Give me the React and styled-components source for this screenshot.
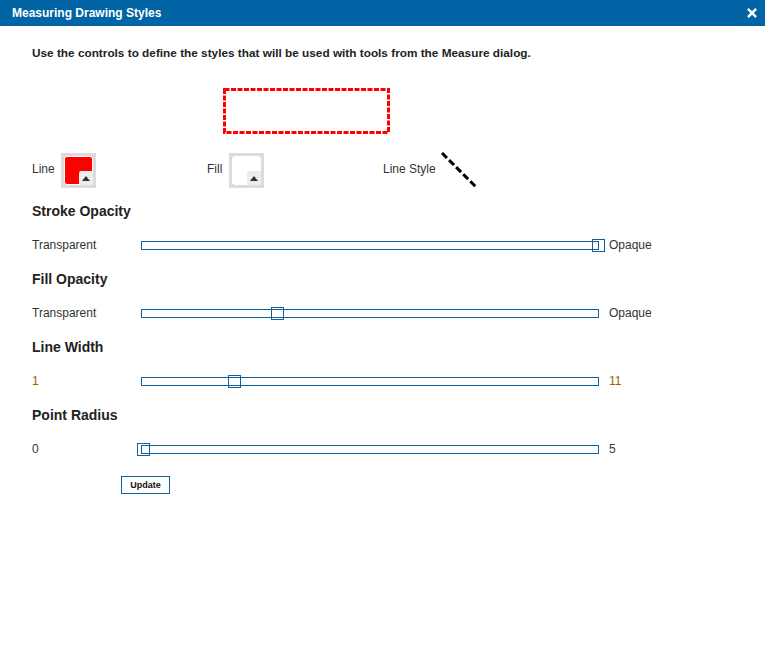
import React from 'react';
import styled, { createGlobalStyle } from 'styled-components';

const GlobalStyle = createGlobalStyle`
  html, body {
    margin: 0;
    padding: 0;
    background: #FFFFFF;
  }
  body {
    font-family: 'Liberation Sans', Arial, sans-serif;
  }
`;

const Dialog = styled.div`
  width: 765px;
  height: 665px;
  background: #FFFFFF;
`;

const TitleBar = styled.div`
  height: 26px;
  background: #0064a5;
  color: #FFFFFF;
  display: flex;
  align-items: center;
  justify-content: space-between;
  padding: 0 8px 0 12px;
`;

const Title = styled.h1`
  margin: 0;
  font-size: 12px;
  font-weight: bold;
`;

const CloseButton = styled.div`
  width: 10px;
  height: 10px;
  display: flex;
`;

const Content = styled.div`
  padding: 20px 32px;
`;

const Intro = styled.p`
  margin: 0;
  font-size: 11.8px;
  line-height: 14px;
  font-weight: bold;
  color: #222222;
`;

const Preview = styled.div`
  margin: 28px 0 0 191px;
  width: 167px;
  height: 46px;
  display: flex;
`;

const SwatchRow = styled.div`
  margin-top: 18px;
  display: flex;
  align-items: center;
  height: 36px;
`;

const SwatchGroup = styled.div`
  width: ${props => props.width}px;
  display: flex;
  align-items: center;
  gap: ${props => props.gap}px;
  font-size: 12px;
  color: #333333;
`;

const SwatchLabel = styled.span`
  padding-bottom: 3px;
`;

const SwatchFrame = styled.div`
  position: relative;
  width: 35px;
  height: 35px;
  box-sizing: border-box;
  background: #dcdcdc;
  padding: 3px;
`;

const SwatchFill = styled.div`
  width: 100%;
  height: 100%;
  box-sizing: border-box;
  border: 1px solid #FFFFFF;
  border-radius: 3px;
  background: ${props => props.color};
`;

const SwatchCorner = styled.div`
  position: absolute;
  right: 3px;
  bottom: 3px;
  width: 14px;
  height: 14px;
  background: #ededed;
  border-top-left-radius: 2px;
  display: flex;
  align-items: center;
  justify-content: center;

  &::after {
    content: '';
    margin-top: 2px;
    border-left: 4px solid transparent;
    border-right: 4px solid transparent;
    border-bottom: 5px solid #333333;
  }
`;

const LineStyleIcon = styled.div`
  width: 36px;
  height: 36px;
  display: flex;
`;

const Section = styled.div`
  margin-top: ${props => props.first ? 15 : 19}px;
`;

const Heading = styled.h2`
  margin: 0;
  font-size: 14px;
  line-height: 16px;
  font-weight: bold;
  color: #222222;
`;

const SliderRow = styled.div`
  margin-top: 19px;
  height: 14px;
  display: flex;
  align-items: center;
  font-size: 12px;
`;

const RangeLabel = styled.span`
  width: ${props => props.width || 'auto'};
  color: ${props => props.color};
`;

const Track = styled.div`
  position: relative;
  width: 458px;
  height: 9px;
  box-sizing: border-box;
  border: 1px solid #0f62a0;
  background: #FFFFFF;
  margin-right: 10px;
`;

const Handle = styled.div`
  position: absolute;
  top: -3px;
  width: 13px;
  height: 13px;
  box-sizing: border-box;
  border: 1px solid #0f62a0;
  background: transparent;
`;

const UpdateButton = styled.button`
  margin: 20px 0 0 89px;
  width: 49px;
  height: 18px;
  padding: 0;
  border: 1px solid #0f62a0;
  background: #FFFFFF;
  font-family: 'Liberation Sans', Arial, sans-serif;
  font-size: 9px;
  font-weight: bold;
  color: #111111;
`;

const sliders = [
  { title: 'Stroke Opacity', min: 'Transparent', max: 'Opaque', value: 1, color: '#333333' },
  { title: 'Fill Opacity', min: 'Transparent', max: 'Opaque', value: 0.295, color: '#333333' },
  { title: 'Line Width', min: '1', max: '11', value: 0.2, color: '#9a6200' },
  { title: 'Point Radius', min: '0', max: '5', value: 0, color: '#3a2f5c' },
];

const Swatch = ({ color }) => (
  <SwatchFrame>
    <SwatchFill color={color} />
    <SwatchCorner />
  </SwatchFrame>
);

export default function App() {
  return (
    <Dialog>
      <GlobalStyle />
      <TitleBar>
        <Title>Measuring Drawing Styles</Title>
        <CloseButton>
          <svg width="10" height="10" viewBox="0 0 10 10">
            <path d="M1.8 1.8 L8.2 8.2 M8.2 1.8 L1.8 8.2" stroke="#FFFFFF" strokeWidth="2.4" strokeLinecap="square" />
          </svg>
        </CloseButton>
      </TitleBar>
      <Content>
        <Intro>Use the controls to define the styles that will be used with tools from the Measure dialog.</Intro>
        <Preview>
          <svg width="167" height="46" viewBox="0 0 167 46">
            <rect x="1.5" y="1.5" width="164" height="43" fill="none" stroke="#ff0000" strokeWidth="3" strokeDasharray="5 1.5" />
          </svg>
        </Preview>
        <SwatchRow>
          <SwatchGroup width={175} gap={6}>
            <SwatchLabel>Line</SwatchLabel>
            <Swatch color="#ff0000" />
          </SwatchGroup>
          <SwatchGroup width={176} gap={7}>
            <SwatchLabel>Fill</SwatchLabel>
            <Swatch color="#FFFFFF" />
          </SwatchGroup>
          <SwatchGroup width={120} gap={5}>
            <SwatchLabel>Line Style</SwatchLabel>
            <LineStyleIcon>
              <svg width="36" height="36" viewBox="0 0 36 36">
                <line x1="1" y1="1" x2="35" y2="35" stroke="#000000" strokeWidth="3" strokeDasharray="7 3" />
              </svg>
            </LineStyleIcon>
          </SwatchGroup>
        </SwatchRow>
        {sliders.map((s, i) => (
          <Section key={s.title} first={i === 0}>
            <Heading>{s.title}</Heading>
            <SliderRow>
              <RangeLabel width="109px" color={s.color}>{s.min}</RangeLabel>
              <Track>
                <Handle style={{ left: `${s.value * 455 - 5}px` }} />
              </Track>
              <RangeLabel color={s.color}>{s.max}</RangeLabel>
            </SliderRow>
          </Section>
        ))}
        <UpdateButton>Update</UpdateButton>
      </Content>
    </Dialog>
  );
}
